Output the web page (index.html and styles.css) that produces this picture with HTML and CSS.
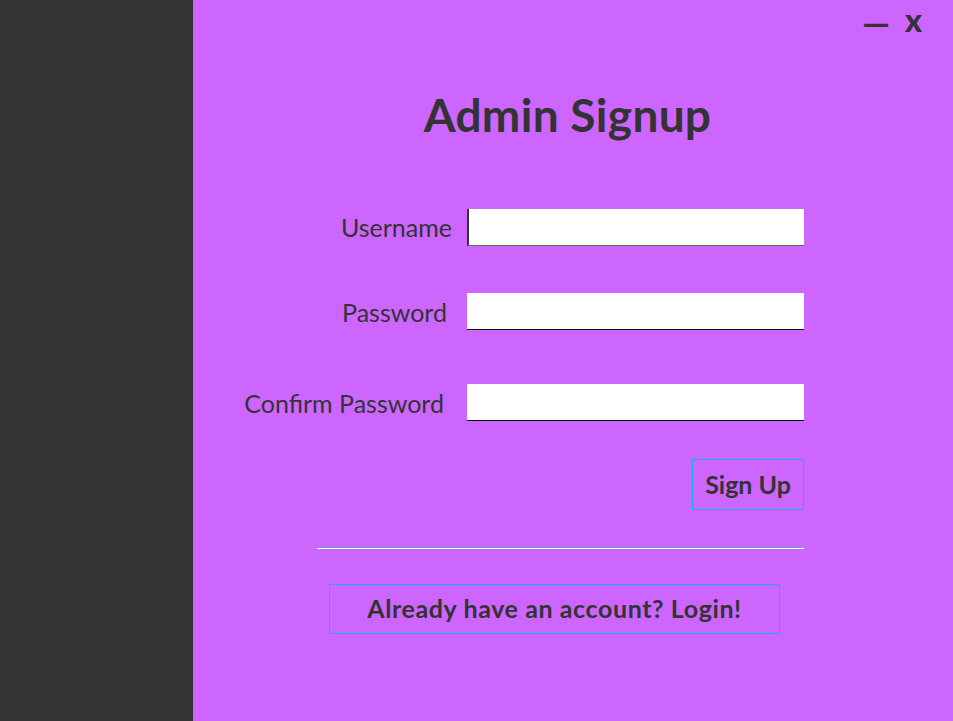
FILE: index.html
```html
<!DOCTYPE html>
<html lang="en">
<head>
<meta charset="utf-8">
<title>Admin Signup</title>
<link rel="stylesheet" href="styles.css">
</head>
<body>
<aside class="sidebar"></aside>
<main class="panel">
  <div class="titlebar">
    <span class="ctrl ctrl-min">—</span>
    <span class="ctrl ctrl-close">x</span>
  </div>
  <h1 class="title">Admin Signup</h1>
  <div class="content">
    <form class="form">
      <div class="row row-user">
        <label class="label label-user" for="user">Username</label>
        <input class="field field-user" id="user" type="text">
      </div>
      <div class="row row-pass">
        <label class="label label-pass" for="pass">Password</label>
        <input class="field field-pass" id="pass" type="password">
      </div>
      <div class="row row-confirm">
        <label class="label label-confirm" for="confirm">Confirm Password</label>
        <input class="field field-confirm" id="confirm" type="password">
      </div>
    </form>
    <div class="actions">
      <button class="btn btn-signup" type="button">Sign Up</button>
    </div>
    <div class="separator"></div>
    <button class="btn btn-login" type="button">Already have an account? Login!</button>
  </div>
</main>
</body>
</html>
```

FILE: styles.css
```css
html, body {
  margin: 0;
  padding: 0;
  height: 100%;
}
body {
  display: flex;
  width: 953px;
  height: 721px;
  overflow: hidden;
  font-family: Lato, "Liberation Sans", sans-serif;
  color: #333333;
}
.sidebar {
  width: 193px;
  flex: 0 0 193px;
  background: #333333;
}
.panel {
  flex: 1;
  background: #cc66ff;
  display: flex;
  flex-direction: column;
}
.titlebar {
  display: flex;
  justify-content: flex-end;
  align-items: center;
  gap: 15px;
  height: 50px;
  padding-right: 31px;
}
.ctrl {
  font-weight: 900;
  color: #333333;
  line-height: 1;
}
.ctrl-min {
  font-size: 35px;
  margin-top: -5px;
}
.ctrl-close {
  font-size: 32px;
  margin-top: -10px;
}
.title {
  margin: 38px 0 0;
  padding-right: 11px;
  text-align: center;
  font-size: 46px;
  font-weight: 700;
  line-height: 54px;
  letter-spacing: 0.3px;
}
.content {
  margin-left: 49px;
  width: 562px;
  display: flex;
  flex-direction: column;
}
.form {
  margin-top: 67px;
  display: flex;
  flex-direction: column;
}
.row {
  display: grid;
  grid-template-columns: 1fr 337px;
  align-items: center;
}
.row-pass { margin-top: 47px; }
.row-confirm { margin-top: 54px; }
.label {
  justify-self: end;
  white-space: nowrap;
  font-size: 25px;
  line-height: 30px;
}
.label-user { padding-right: 15px; margin-top: -2px; }
.label-pass { padding-right: 20px; }
.label-confirm { padding-right: 23px; }
.field {
  box-sizing: border-box;
  height: 37px;
  border: none;
  background: #ffffff;
  margin: 0;
  padding: 0 6px;
  font: inherit;
  outline: none;
}
.field-user {
  border-left: 2px solid #333333;
  border-bottom: 1px solid #666666;
}
.field-pass,
.field-confirm {
  border-bottom: 1px solid #000000;
}
.actions {
  display: flex;
  justify-content: flex-end;
  margin-top: 38px;
}
.btn {
  box-sizing: border-box;
  background: transparent;
  border: 1px solid #12b6dc;
  color: #333333;
  font-family: inherit;
  font-weight: 700;
  font-size: 25px;
  padding: 0;
  cursor: pointer;
}
.btn-signup {
  width: 112px;
  height: 51px;
  padding-bottom: 2px;
}
.separator {
  margin-top: 37px;
  margin-left: 75px;
  width: 487px;
  height: 1px;
  background: #5fa6c8;
  border-bottom: 1px solid #ffffff;
}
.btn-login {
  margin-top: 35px;
  margin-left: 87px;
  width: 451px;
  height: 50px;
  letter-spacing: 0.6px;
  padding-bottom: 2px;
}
```
